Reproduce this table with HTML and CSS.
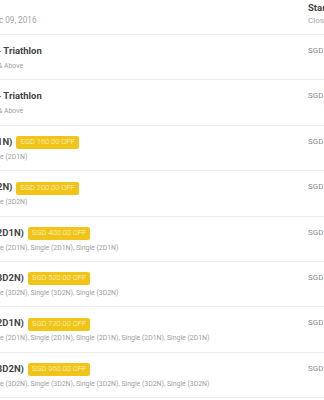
FILE: index.html
```html
<!DOCTYPE html>
<html>
<head>
<meta charset="utf-8">
<link rel="stylesheet" href="styles.css">
</head>
<body>
<div class="sheet">
  <div class="row head">
    <div class="main head-main"><div class="date">Dec 09, 2016</div></div>
    <div class="side head-side"><div class="side-strong">Starts</div><div class="side-light">Closes</div></div>
  </div>
  <div class="row">
    <div class="main"><div class="title ind-tri">- Triathlon</div><div class="sub ind-above">&amp; Above</div></div>
    <div class="side"><div class="side-price">SGD 85.00</div></div>
  </div>
  <div class="row">
    <div class="main"><div class="title ind-tri">- Triathlon</div><div class="sub ind-above">&amp; Above</div></div>
    <div class="side"><div class="side-price">SGD 95.00</div></div>
  </div>
  <div class="row">
    <div class="main"><div class="title ind-short">(2D1N)<span class="badge">SGD 160.00 OFF</span></div><div class="sub ind-single">Single (2D1N)</div></div>
    <div class="side"><div class="side-price">SGD 320.00</div></div>
  </div>
  <div class="row">
    <div class="main"><div class="title ind-short">(3D2N)<span class="badge">SGD 200.00 OFF</span></div><div class="sub ind-single">Single (3D2N)</div></div>
    <div class="side"><div class="side-price">SGD 400.00</div></div>
  </div>
  <div class="row">
    <div class="main"><div class="title ind-long">(2D1N)<span class="badge">SGD 400.00 OFF</span></div><div class="sub ind-single">Single (2D1N), Single (2D1N), Single (2D1N)</div></div>
    <div class="side"><div class="side-price">SGD 960.00</div></div>
  </div>
  <div class="row">
    <div class="main"><div class="title ind-long">(3D2N)<span class="badge">SGD 520.00 OFF</span></div><div class="sub ind-single">Single (3D2N), Single (3D2N), Single (3D2N)</div></div>
    <div class="side"><div class="side-price">SGD 1,200.00</div></div>
  </div>
  <div class="row">
    <div class="main"><div class="title ind-long">(2D1N)<span class="badge">SGD 720.00 OFF</span></div><div class="sub ind-single">Single (2D1N), Single (2D1N), Single (2D1N), Single (2D1N), Single (2D1N)</div></div>
    <div class="side"><div class="side-price">SGD 1,600.00</div></div>
  </div>
  <div class="row">
    <div class="main"><div class="title ind-long">(3D2N)<span class="badge">SGD 960.00 OFF</span></div><div class="sub ind-single">Single (3D2N), Single (3D2N), Single (3D2N), Single (3D2N), Single (3D2N)</div></div>
    <div class="side"><div class="side-price">SGD 2,000.00</div></div>
  </div>
</div>
</body>
</html>
```
FILE: styles.css
```css
html, body {
  margin: 0;
  padding: 0;
  background: #ffffff;
  overflow: hidden;
}
body {
  font-family: Roboto, "Liberation Sans", sans-serif;
  color: #444444;
}
.sheet {
  width: 420px;
}
.row {
  display: flex;
  height: 36.4px;
  padding-top: 8px;
  border-bottom: 1px solid #ececec;
}
.row.head {
  height: 34px;
  padding-top: 0;
}
.main {
  width: 308px;
  flex: none;
  overflow: hidden;
  white-space: nowrap;
}
.side {
  flex: none;
  width: 100px;
  white-space: nowrap;
}
.head-main {
  padding-top: 13px;
}
.head-side {
  padding-top: 1px;
}
.date {
  font-size: 8.2px;
  font-weight: 400;
  line-height: 14px;
  color: #a3a3a3;
  text-indent: -10.8px;
}
.side-strong {
  font-size: 9.5px;
  font-weight: 700;
  line-height: 14px;
  color: #444444;
}
.side-light {
  font-size: 8px;
  font-weight: 400;
  line-height: 12px;
  color: #a6a6a6;
}
.side-price {
  font-size: 8px;
  font-weight: 400;
  line-height: 16px;
  color: #8c8c8c;
}
.title {
  font-size: 9.5px;
  font-weight: 700;
  line-height: 16px;
  color: #454545;
}
.sub {
  font-size: 6.9px;
  font-weight: 400;
  line-height: 14px;
  color: #a0a0a0;
}
.ind-tri { text-indent: -2.5px; }
.ind-above { text-indent: -2px; }
.ind-short { text-indent: -18px; }
.ind-long { text-indent: -6.5px; }
.ind-single { text-indent: -15px; }
.badge {
  display: inline-block;
  vertical-align: top;
  margin-top: 2.5px;
  margin-left: 4px;
  height: 13px;
  line-height: 12px;
  padding: 0 4px;
  box-sizing: border-box;
  border-radius: 2px;
  background: #f0c419;
  color: #fdf6dc;
  font-size: 7.5px;
  font-weight: 300;
  text-indent: 0;
}
```
